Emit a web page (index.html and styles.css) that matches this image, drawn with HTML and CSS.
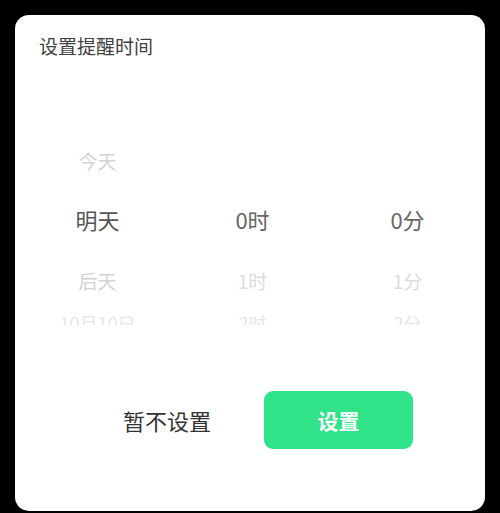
FILE: index.html
```html
<!DOCTYPE html>
<html lang="zh-CN">
<head>
  <meta charset="UTF-8" />
  <meta name="viewport" content="width=device-width, initial-scale=1.0"/>
  <title>设置提醒时间</title>
  <link rel="stylesheet" href="styles.css">
</head>
<body>
  <div class="dialog">
    <div class="title">设置提醒时间</div>

    <div class="picker">
      <div class="col">
        <div class="item far">今天</div>
        <div class="item active">明天</div>
        <div class="item far">后天</div>
        <div class="item edge">10月10日</div>
      </div>
      <div class="col">
        <div class="item far"></div>
        <div class="item active">0时</div>
        <div class="item far">1时</div>
        <div class="item edge">2时</div>
      </div>
      <div class="col">
        <div class="item far"></div>
        <div class="item active">0分</div>
        <div class="item far">1分</div>
        <div class="item edge">2分</div>
      </div>
    </div>

    <div class="actions">
      <span class="skip">暂不设置</span>
      <button class="confirm">设置</button>
    </div>
  </div>
</body>
</html>
```

FILE: styles.css
```css
html, body { margin: 0; padding: 0; background: #000; }
body { font-family: "Noto Sans CJK SC", "Noto Sans", sans-serif; }
.dialog { margin: 15px 15px 0; height: 496px; background: #fff; border-radius: 14px; overflow: hidden; }
.title { padding: 18px 0 0 24px; font-size: 19px; line-height: 26px; color: #404040; }
.picker { display: flex; margin-top: 72px; padding-left: 5px; height: 194px; overflow: hidden; }
.col { flex: 1; display: flex; flex-direction: column; align-items: center; }
.item { flex-shrink: 0; height: 60px; line-height: 60px; font-size: 19px; color: #d2d2d2; white-space: nowrap; }
.item.active { line-height: 56px; font-size: 22px; color: #555; }
.col + .col .item.active { color: #666; }
.col + .col .item.far { color: #dcdcdc; }
.item.edge { height: 25px; line-height: 24px; font-size: 18px; color: #e6e6e6; }
.actions { display: flex; align-items: center; gap: 53px; margin-top: 66px; padding-left: 108px; }
.skip { font-size: 22px; color: #333; }
.confirm { width: 149px; height: 58px; border: none; border-radius: 9px; background: #30e388; color: #fff; font-family: inherit; font-size: 21px; font-weight: bold; }
```
